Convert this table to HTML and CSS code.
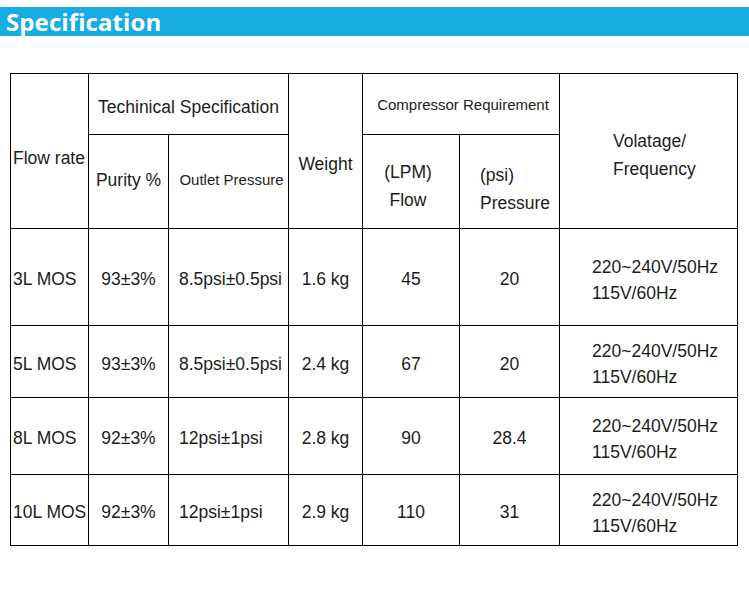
FILE: index.html
```html
<!DOCTYPE html>
<html>
<head>
<meta charset="utf-8">
<link rel="stylesheet" href="styles.css">
</head>
<body>
<div class="bar"><h1 class="bar-title">Specification</h1></div>
<table class="spec">
  <colgroup>
    <col class="c1"><col class="c2"><col class="c3"><col class="c4"><col class="c5"><col class="c6"><col class="c7">
  </colgroup>
  <tr class="h1">
    <td rowspan="2" class="left flowrate">Flow rate</td>
    <td colspan="2" class="tech">Techinical Specification</td>
    <td rowspan="2" class="weight">Weight</td>
    <td colspan="2" class="small comp">Compressor Requirement</td>
    <td rowspan="2" class="volt-h">Volatage/<br>Frequency</td>
  </tr>
  <tr class="h2">
    <td class="purity">Purity %</td>
    <td class="small outlet">Outlet Pressure</td>
    <td class="lpm">(LPM)<br>Flow</td>
    <td class="psi">(psi)<br>Pressure</td>
  </tr>
  <tr class="r1">
    <td class="left">3L MOS</td><td>93±3%</td><td class="press">8.5psi±0.5psi</td><td>1.6 kg</td><td>45</td><td>20</td>
    <td class="volt">220~240V/50Hz<br>115V/60Hz</td>
  </tr>
  <tr class="r2">
    <td class="left">5L MOS</td><td>93±3%</td><td class="press">8.5psi±0.5psi</td><td>2.4 kg</td><td>67</td><td>20</td>
    <td class="volt">220~240V/50Hz<br>115V/60Hz</td>
  </tr>
  <tr class="r3">
    <td class="left">8L MOS</td><td>92±3%</td><td class="press">12psi±1psi</td><td>2.8 kg</td><td>90</td><td>28.4</td>
    <td class="volt">220~240V/50Hz<br>115V/60Hz</td>
  </tr>
  <tr class="r4">
    <td class="left">10L MOS</td><td>92±3%</td><td class="press">12psi±1psi</td><td>2.9 kg</td><td>110</td><td>31</td>
    <td class="volt">220~240V/50Hz<br>115V/60Hz</td>
  </tr>
</table>
</body>
</html>
```

FILE: styles.css
```css
html, body {
  margin: 0;
  padding: 0;
  background: #fff;
}
body {
  font-family: "Liberation Sans", Arial, sans-serif;
  color: #1c1c1c;
}
.bar {
  margin-top: 7px;
  height: 29px;
  background: #17ade2;
  display: flex;
  align-items: center;
}
.bar-title {
  margin: 0 0 0 6px;
  font-family: "Open Sans", "Noto Sans", sans-serif;
  font-weight: 700;
  font-size: 24px;
  line-height: 29px;
  color: #fff;
  letter-spacing: 0.1px;
}
.spec {
  margin: 37px 0 0 10px;
  border-collapse: collapse;
  table-layout: fixed;
  width: 727px;
  font-size: 17.5px;
}
.c1 { width: 78px; }
.c2 { width: 80px; }
.c3 { width: 120px; }
.c4 { width: 74px; }
.c5 { width: 97px; }
.c6 { width: 100px; }
.c7 { width: 178px; }
.spec td {
  border: 1px solid #000;
  padding: 4px 0 0 0;
  text-align: center;
  vertical-align: middle;
  line-height: 20px;
  white-space: nowrap;
}
.spec td.left {
  text-align: left;
  padding-left: 2px;
}
.spec .small { font-size: 15px; }
.h1 { height: 61px; }
.h2 { height: 94px; }
.r1 { height: 97px; }
.r2 { height: 72px; }
.r3 { height: 77px; }
.r4 { height: 71px; }

.spec td.flowrate { padding-top: 14px; }
.spec td.tech { padding-top: 5px; }
.spec td.weight { padding-top: 25px; }
.spec td.comp { padding-top: 1px; padding-left: 4px; }
.spec td.volt-h {
  text-align: left;
  padding-left: 53px;
  padding-top: 7px;
  line-height: 28px;
}
.spec td.purity { padding-top: 0; padding-bottom: 4px; }
.spec td.outlet { padding-top: 0; padding-bottom: 4px; padding-left: 6px; }
.spec td.lpm {
  line-height: 28px;
  padding-top: 8px;
  padding-right: 6px;
}
.spec td.psi {
  text-align: left;
  line-height: 28px;
  padding-top: 14px;
  padding-left: 20px;
}
.spec td.press {
  text-align: left;
  padding-left: 10px;
}
.spec td.volt {
  text-align: left;
  padding-left: 32px;
  line-height: 26px;
  padding-top: 5px;
}
```
